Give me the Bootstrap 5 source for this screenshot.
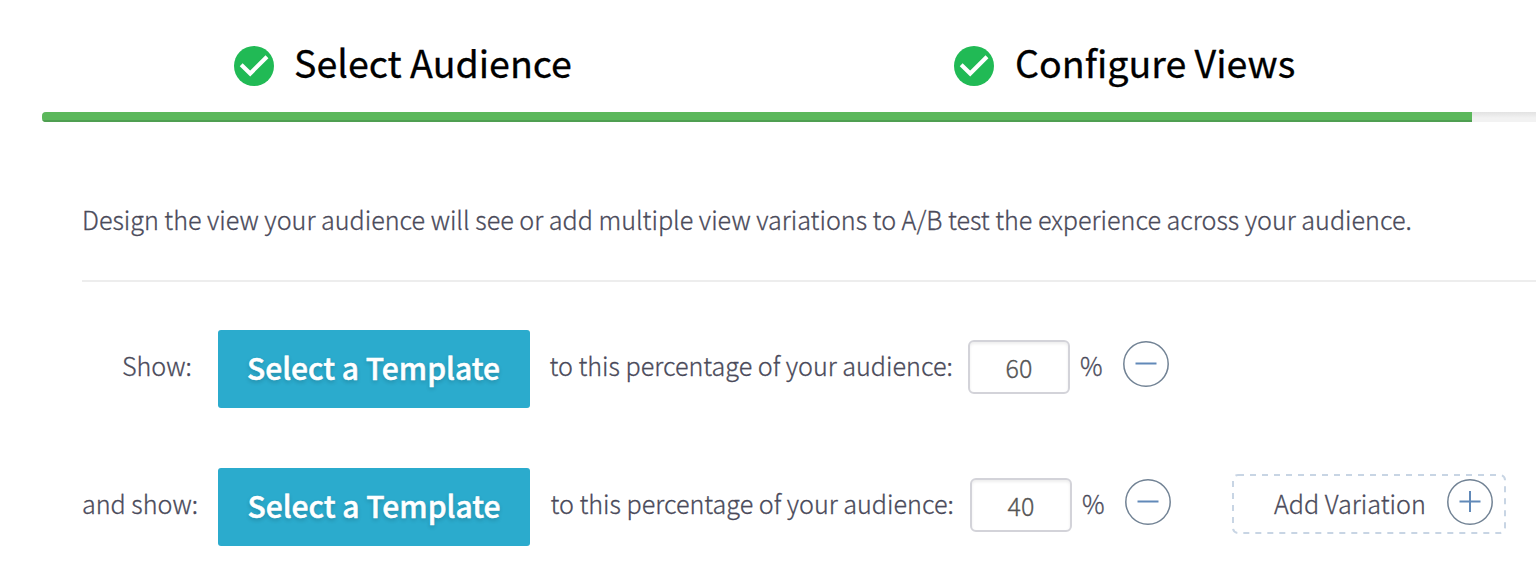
<!DOCTYPE html>
<html lang="en">
<head>
<meta charset="utf-8">
<meta name="viewport" content="width=device-width, initial-scale=1">
<title>Configure Views</title>
<link href="https://cdn.jsdelivr.net/npm/bootstrap@5.3.0/dist/css/bootstrap.min.css" rel="stylesheet">
<style>
  body { font-family: "Noto Sans CJK SC", "Open Sans", sans-serif; font-weight: 300; font-size: 25.13px; line-height: 36px; color: #4a4a5a; background: #fff; height: 568px; overflow: hidden; -webkit-text-stroke: .3px; }
  .wizard { padding-left: 42px; }
  .steps { height: 112px; padding-top: 36px; }
  .step { width: 720px; height: 60px; padding-left: 192px; }
  .step-title { font-size: 37.6px; font-weight: 400; line-height: 60px; color: #000; margin: -8px 0 0 20px; white-space: nowrap; }
  .step + .step .step-title { margin-left: 21px; }
  .step-bar { height: 10px; border-radius: 4px 0 0 4px; background: linear-gradient(#e2e2e2, #f2f2f2 60%); }
  .step-bar .progress-bar { background: #5cb85c; box-shadow: inset 0 -2px 0 #4f9f51; }
  .views { padding-left: 40px; }
  .intro { padding-top: 79px; height: 160px; border-bottom: 2px solid #ededed; white-space: nowrap; }
  .variation { height: 78px; margin-top: 48px; white-space: nowrap; }
  .variation + .variation { margin-top: 60px; }
  .variation span { display: inline-block; margin-top: -8px; }
  .variation .row-label { width: 136px; }
  .first .row-label { padding-left: 40px; }
  .btn-template { width: 312px; height: 78px; border: 0; border-radius: 3px; background: #2babcd; color: #fff; font-family: inherit; font-size: 30px; font-weight: 500; line-height: 72px; padding: 0 0 4px; text-shadow: 0 2px 4px rgba(0,0,0,.2); -webkit-text-stroke: .5px; }
  .btn-template:hover { background: #2599b8; color: #fff; }
  .first .btn-template { padding-right: 1px; }
  .audience-text { width: 418.5px; margin-left: 19.5px; }
  .second .audience-text { width: 419.5px; margin-left: 20.5px; }
  .share-input { width: 102px; height: 54px; margin-top: -4px; border: 2px solid #d3d3d9; border-radius: 6px; padding: 0 0 1px; text-align: center; font-size: 25px; font-weight: 300; color: #555; box-shadow: inset 0 2px 3px rgba(0,0,0,.07); }
  .variation .percent { width: 43px; margin-left: 10px; }
  .round-btn { width: 46px; height: 46px; padding: 0; border: 0; background: none; display: block; margin-top: -10px; flex: none; }
  .round-btn svg, .step svg { display: block; }
  .add-box { width: 274px; height: 60px; margin: -6px 0 0 61px; }
  .add-box { position: relative; }
  .add-box .frame { position: absolute; inset: 0; }
  .add-box span { width: 173px; margin: -3px 0 0 42px; }
  .add-box .round-btn { margin-top: -4px; }
</style>
</head>
<body>
<main class="wizard">
  <div class="steps d-flex">
    <div class="step d-flex align-items-center flex-shrink-0">
      <svg width="40" height="40" viewBox="0 0 40 40"><circle cx="20" cy="20" r="20" fill="#21ba55"/><path d="M7.2 18.7 16.2 27.5 33 10.8" fill="none" stroke="#fff" stroke-width="4.1"/></svg>
      <h2 class="step-title">Select Audience</h2>
    </div>
    <div class="step d-flex align-items-center flex-shrink-0">
      <svg width="40" height="40" viewBox="0 0 40 40"><circle cx="20" cy="20" r="20" fill="#21ba55"/><path d="M7.2 18.7 16.2 27.5 33 10.8" fill="none" stroke="#fff" stroke-width="4.1"/></svg>
      <h2 class="step-title">Configure Views</h2>
    </div>
  </div>
  <div class="progress step-bar" role="progressbar" aria-label="Progress">
    <div class="progress-bar" style="width: 1430px"></div>
  </div>
  <section class="views">
    <p class="intro mb-0">Design the view your audience will see or add multiple view variations to A/B test the experience across your audience.</p>
    <div class="variation first d-flex align-items-center">
      <span class="row-label">Show:</span>
      <button class="btn btn-template" type="button">Select a Template</button>
      <span class="audience-text">to this percentage of your audience:</span>
      <input class="form-control share-input flex-shrink-0" value="60" aria-label="Percentage">
      <span class="percent">%</span>
      <button class="round-btn" type="button" aria-label="Remove"><svg width="46" height="46"><circle cx="23" cy="23" r="22.2" fill="none" stroke="#718294" stroke-width="1.5"/><path d="M12.5 22.5h21" stroke="#6189b8" stroke-width="2"/></svg></button>
    </div>
    <div class="variation second d-flex align-items-center">
      <span class="row-label">and show:</span>
      <button class="btn btn-template" type="button">Select a Template</button>
      <span class="audience-text">to this percentage of your audience:</span>
      <input class="form-control share-input flex-shrink-0" value="40" aria-label="Percentage">
      <span class="percent">%</span>
      <button class="round-btn" type="button" aria-label="Remove"><svg width="46" height="46"><circle cx="23" cy="23" r="22.2" fill="none" stroke="#718294" stroke-width="1.5"/><path d="M12.5 22.5h21" stroke="#6189b8" stroke-width="2"/></svg></button>
      <div class="add-box d-flex align-items-center">
        <svg class="frame" width="274" height="60"><rect x="1" y="1" width="272" height="58" rx="5" fill="none" stroke="#c8d5e4" stroke-width="2" stroke-dasharray="6 6"/></svg>
        <span>Add Variation</span>
        <button class="round-btn" type="button" aria-label="Add"><svg width="46" height="46"><circle cx="23" cy="23" r="22.2" fill="none" stroke="#718294" stroke-width="1.5"/><path d="M12.5 22.5h21M23 12v21" stroke="#6189b8" stroke-width="2"/></svg></button>
      </div>
    </div>
  </section>
</main>
<script src="https://cdn.jsdelivr.net/npm/bootstrap@5.3.0/dist/js/bootstrap.bundle.min.js"></script>
</body>
</html>
